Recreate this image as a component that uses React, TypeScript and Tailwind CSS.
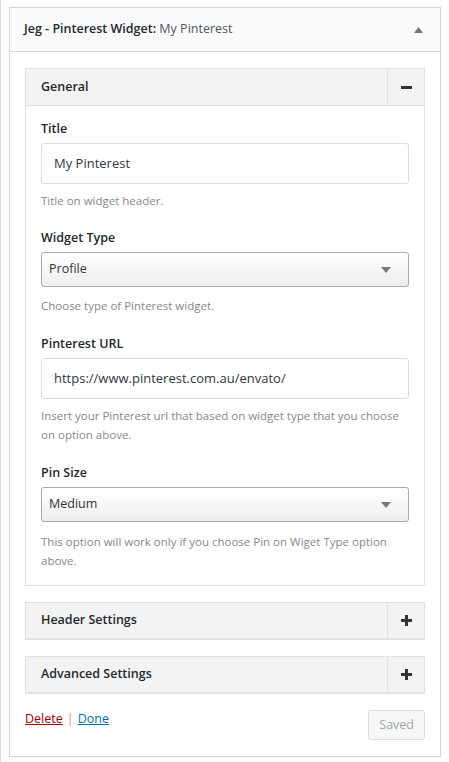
import { ReactNode } from "react"

const font = { fontFamily: '"Open Sans", "Noto Sans", sans-serif' }

function Caret() {
  return (
    <svg width="10" height="6" viewBox="0 0 10 6">
      <path d="M0 0 L10 0 L5 6 Z" fill="currentColor" />
    </svg>
  )
}

function Label({ children }: { children: ReactNode }) {
  return <div className="text-[12.5px] font-semibold leading-[20px] text-[#23282d] mb-[4px]">{children}</div>
}

function Help({ children, mt = "mt-[7px]" }: { children: ReactNode; mt?: string }) {
  return <p className={`${mt} text-[11.5px] leading-[19px] text-[#888888]`}>{children}</p>
}

function TextInput({ value }: { value: string }) {
  return (
    <div className="h-[41px] rounded-[3px] border border-[#dddddd] bg-white px-[12px] flex items-center text-[13px] text-[#32373c]">
      {value}
    </div>
  )
}

function Select({ value }: { value: string }) {
  return (
    <div className="h-[35px] rounded-[3px] border border-[#aaaaaa] bg-gradient-to-b from-white to-[#eeeeee] pl-[7px] pr-[17px] flex items-center justify-between text-[12.5px] text-[#333333]">
      <span>{value}</span>
      <span className="text-[#777777]">
        <Caret />
      </span>
    </div>
  )
}

function PanelHead({ title, sign }: { title: string; sign: "plus" | "minus" }) {
  return (
    <div className={`flex bg-[#f3f3f3] ${sign === "minus" ? "h-[36px]" : "h-[35px]"}`}>
      <div className="flex-1 flex items-center pl-[15px] text-[12.5px] font-semibold text-[#23282d]">{title}</div>
      <div className="w-[37px] border-l border-[#e2e2e2] flex items-center justify-center">
        {sign === "minus" ? (
          <div className="w-[11px] h-[3px] bg-[#333333]" />
        ) : (
          <svg width="11" height="11" viewBox="0 0 11 11">
            <path d="M4 0h3v4h4v3H7v4H4V7H0V4h4z" fill="#333333" />
          </svg>
        )}
      </div>
    </div>
  )
}

export default function App() {
  return (
    <div style={font} className="w-[449px] h-[762px] bg-white border-l border-[#dddddd] pt-[7px] pl-[8px]">
      <div className="w-[432px] border border-[#d5d5d5] bg-white">
        <div className="h-[44px] bg-[#fafafa] border-b border-[#d5d5d5] flex items-center justify-between pl-[14px] pr-[17px]">
          <div className="text-[12.5px] font-semibold text-[#23282d]">
            Jeg - Pinterest Widget: <span className="font-normal text-[#50575e]">My Pinterest</span>
          </div>
          <span className="text-[#72777c]">
            <svg width="9" height="6" viewBox="0 0 9 6">
              <path d="M0 6 L9 6 L4.5 0 Z" fill="currentColor" />
            </svg>
          </span>
        </div>

        <div className="px-[15px] pt-[16px] pb-[16px]">
          <div className="border border-[#e2e2e2]">
            <div className="border-b border-[#e2e2e2]">
              <PanelHead title="General" sign="minus" />
            </div>
            <div className="px-[15px] pt-[13px] pb-[15px]">
              <Label>Title</Label>
              <TextInput value="My Pinterest" />
              <Help>Title on widget header.</Help>

              <div className="mt-[18px]">
                <Label>Widget Type</Label>
                <Select value="Profile" />
                <Help mt="mt-[9px]">Choose type of Pinterest widget.</Help>
              </div>

              <div className="mt-[19px]">
                <Label>Pinterest URL</Label>
                <TextInput value="https://www.pinterest.com.au/envato/" />
                <Help>Insert your Pinterest url that based on widget type that you choose on option above.</Help>
              </div>

              <div className="mt-[19px]">
                <Label>Pin Size</Label>
                <Select value="Medium" />
                <Help mt="mt-[10px]">This option will work only if you choose Pin on Wiget Type option above.</Help>
              </div>
            </div>
          </div>

          <div className="mt-[16px] border border-[#e2e2e2] border-b-2">
            <PanelHead title="Header Settings" sign="plus" />
          </div>

          <div className="mt-[16px] border border-[#e2e2e2] border-b-2">
            <PanelHead title="Advanced Settings" sign="plus" />
          </div>

          <div className="mt-[16px] flex justify-between">
            <div className="text-[12.5px] text-[#555555] flex items-start">
              <a className="text-[#a00000] underline" href="#">Delete</a>
              <span className="mx-[4px] text-[#c49a62]">|</span>
              <a className="text-[#0073aa] underline" href="#">Done</a>
            </div>
            <button className="h-[30px] px-[10px] rounded-[3px] border border-[#dddddd] bg-[#f7f7f7] text-[12.5px] text-[#a0a5aa]">
              Saved
            </button>
          </div>
        </div>
      </div>
    </div>
  )
}
